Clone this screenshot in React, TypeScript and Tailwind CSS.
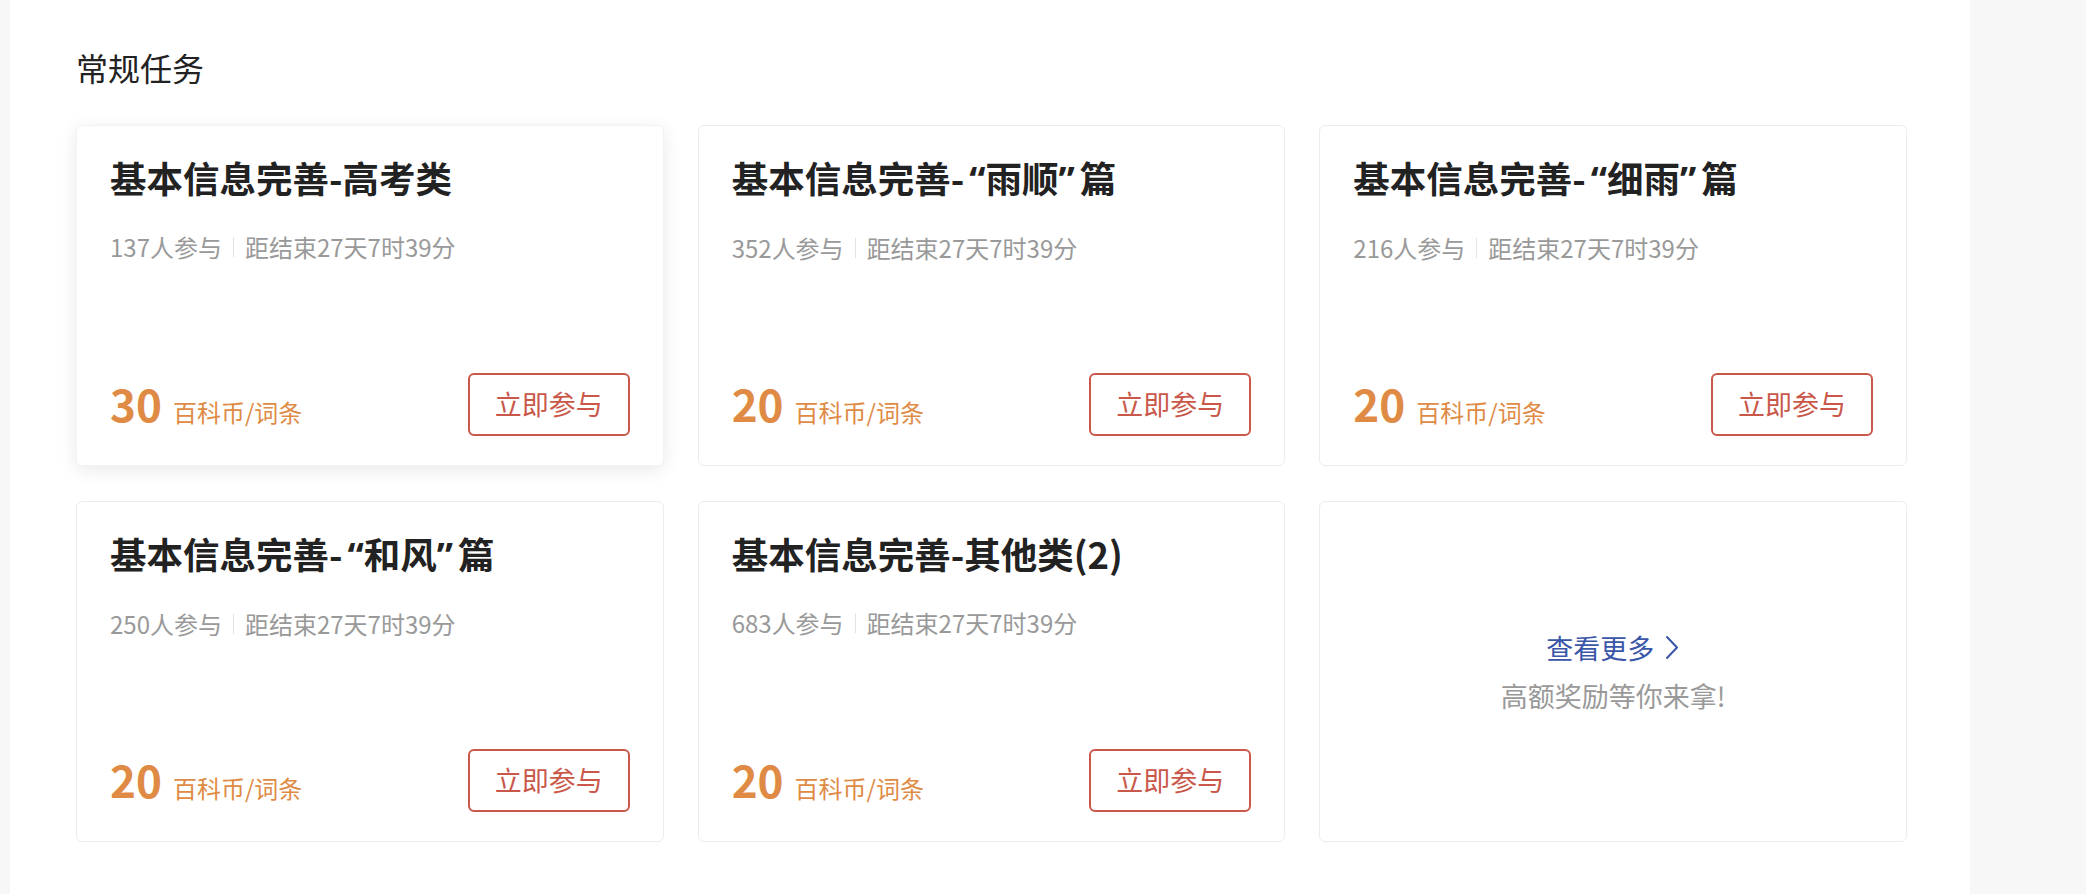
import React from "react";

interface Task {
  id: number;
  title: string;
  joined: number;
  remain: string;
  coins: number;
}

const tasks: Task[] = [
  { id: 1, title: "基本信息完善-高考类", joined: 137, remain: "距结束27天7时39分", coins: 30 },
  { id: 2, title: "基本信息完善-“雨顺”篇", joined: 352, remain: "距结束27天7时39分", coins: 20 },
  { id: 3, title: "基本信息完善-“细雨”篇", joined: 216, remain: "距结束27天7时39分", coins: 20 },
  { id: 4, title: "基本信息完善-“和风”篇", joined: 250, remain: "距结束27天7时39分", coins: 20 },
  { id: 5, title: "基本信息完善-其他类(2)", joined: 683, remain: "距结束27天7时39分", coins: 20 },
];

// the CJK font's full-width quotes are too wide here, use latin ones
function Title({ text }: { text: string }) {
  return (
    <>
      {Array.from(text).map((ch, i) =>
        ch === "“" ? (
          <span key={i} className="ml-[5px] font-['Noto_Sans',sans-serif]">{ch}</span>
        ) : ch === "”" ? (
          <span key={i} className="mr-[5px] font-['Noto_Sans',sans-serif]">{ch}</span>
        ) : (
          ch
        )
      )}
    </>
  );
}

function TaskCard({ task, active }: { task: Task; active?: boolean }) {
  return (
    <div
      className={
        active
          ? "flex h-[341px] flex-col rounded-[6px] border border-[#f3f3f3] bg-white px-[33px] pb-[29px] pt-[30px] shadow-[0_4px_18px_rgba(0,0,0,0.09)]"
          : "flex h-[341px] flex-col rounded-[6px] border border-[#ececec] bg-white px-[33px] pb-[29px] pt-[30px]"
      }
    >
      <h3 className="text-[36.5px] font-bold leading-[44px] text-[#222]">
        <Title text={task.title} />
      </h3>
      <div className="mt-[31px] flex items-center text-[24px] leading-[32px] text-[#999]">
        <span>{task.joined}人参与</span>
        <span className="mx-[11px] h-[20px] w-px bg-[#e3e3e3]" />
        <span>{task.remain}</span>
      </div>
      <div className="mt-auto flex items-center justify-between">
        <div className="flex items-baseline text-[#e08b45]">
          <span className="text-[44px] font-bold leading-[44px]">{task.coins}</span>
          <span className="ml-[11px] text-[24px] leading-[32px]">百科币/词条</span>
        </div>
        <button className="flex h-[63px] w-[162px] items-center justify-center rounded-[6px] border-2 border-[#c9584a] bg-white text-[27px] text-[#c9584a]">
          立即参与
        </button>
      </div>
    </div>
  );
}

function MoreCard() {
  return (
    <div className="flex h-[341px] flex-col items-center justify-center rounded-[6px] border border-[#ececec] bg-white">
      <div className="flex items-center text-[27px] leading-[34px] text-[#3a56a8]">
        <span>查看更多</span>
        <svg width="16" height="25" viewBox="0 0 16 25" className="ml-[10px]" fill="none">
          <polyline points="3,2 13,12.5 3,23" stroke="#3a56a8" strokeWidth="2" strokeLinejoin="round" strokeLinecap="round" />
        </svg>
      </div>
      <p className="mt-[14px] text-[27px] leading-[34px] text-[#999]">高额奖励等你来拿!</p>
    </div>
  );
}

export default function App() {
  return (
    <div className="flex h-[894px] w-full bg-[#f7f7f7] pl-[10px] font-['Noto_Sans_CJK_SC',sans-serif]">
      <div className="h-full w-[1960px] bg-white pl-[66px] pr-[63px] pt-[48px]">
        <h2 className="text-[32px] leading-[38px] text-[#222]">常规任务</h2>
        <div className="mt-[39px] grid grid-cols-3 gap-x-[34px] gap-y-[35px]">
          {tasks.map((t, i) => (
            <TaskCard key={t.id} task={t} active={i === 0} />
          ))}
          <MoreCard />
        </div>
      </div>
    </div>
  );
}
